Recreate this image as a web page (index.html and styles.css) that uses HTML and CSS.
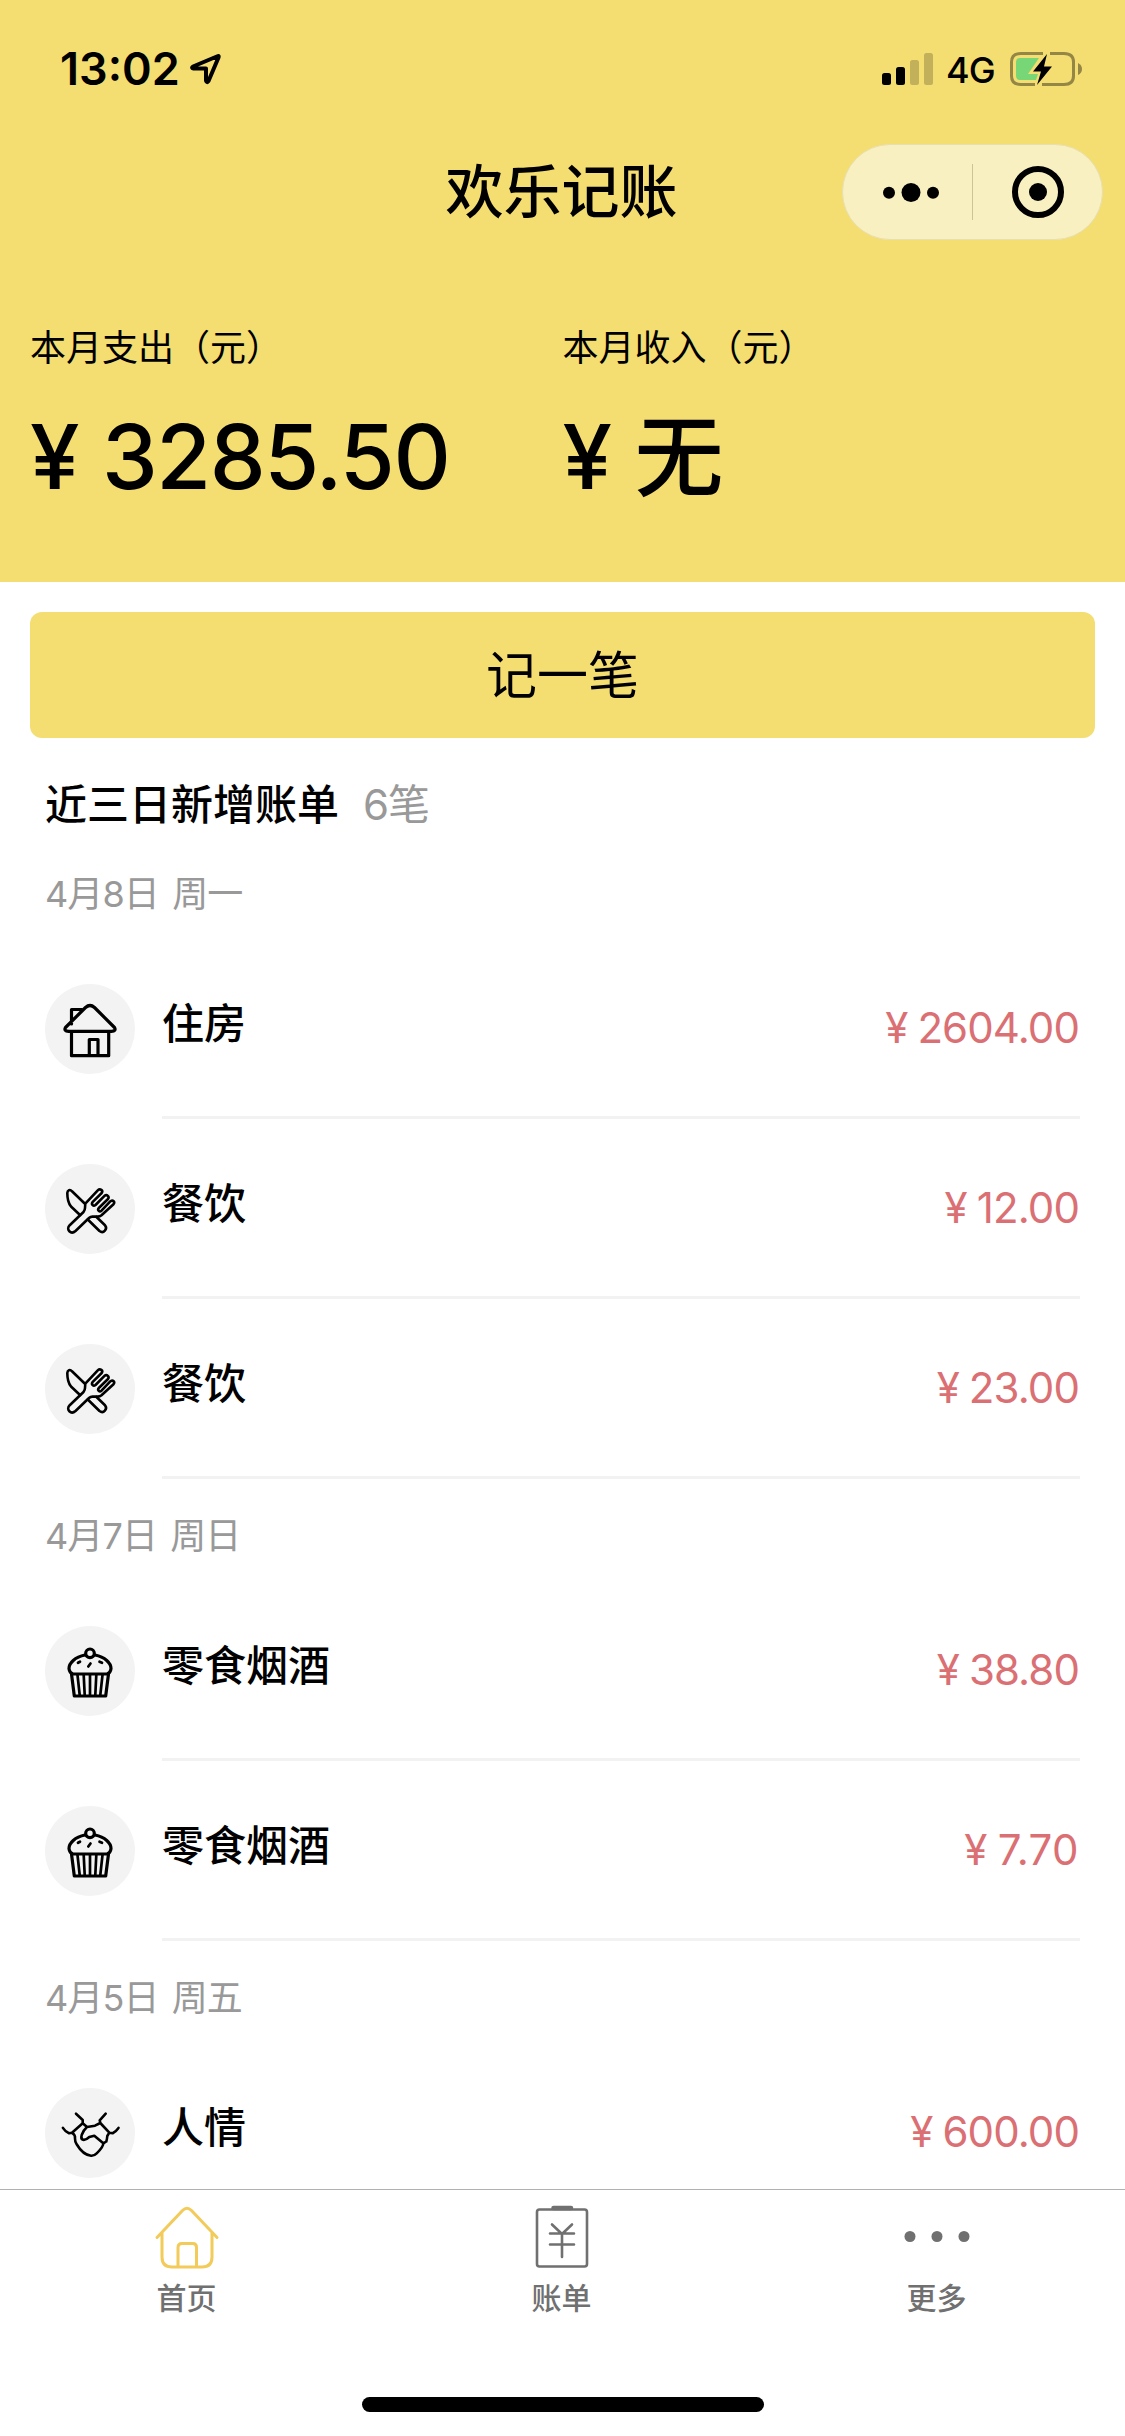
FILE: index.html
```html
<!DOCTYPE html>
<html lang="zh-CN">
<head>
<meta charset="utf-8">
<title>欢乐记账</title>
<link rel="stylesheet" href="styles.css">
</head>
<body>
<svg class="sprite" aria-hidden="true">
  <symbol id="i-house" viewBox="0 0 90 90">
    <path d="M26.500 40V25.500H37M24 47.300H66.500Q71.500 47 69.500 43.500L49.500 23.500Q45 19.500 40.500 23.500L20.500 43.500Q18.500 47 23.500 47.300M26.500 48V71.700H63.700V48M44.300 71V55.500H53V71"/>
  </symbol>
  <symbol id="i-meal" viewBox="0 0 90 90">
    <g class="mid">
    <path d="M39.700 39.500L27 27.300C25 25 22.500 26 22.300 29C22.300 36 23.500 39.500 26 42.500L35 51M51.500 53L60 61.300C63 65 58.500 70 54.500 67L42.800 55.500"/>
    <path d="M40.300 39.700L53 26.200C55 24 58.500 26.500 56.700 29L47.500 38.200C46 40.500 48.300 42.700 50.500 41L59.500 31.800C62 30 64.700 32.700 63 35L53.800 44C52 46.300 54.500 48.300 56.500 46.700L65.500 37.200C68 35.500 70.300 38 68.500 40.300L56.500 51.300Q55 52.600 52.500 52.600H47.500Q45.500 52.600 44 54L30.500 67C26 71 20.500 65.500 24.700 61.200L38.500 48Q40 46 40 44Z"/>
    </g>
  </symbol>
  <symbol id="i-cake" viewBox="0 0 90 90">
    <circle cx="45" cy="27.300" r="4.300"/>
    <path d="M40 29C30 31 24 37 24 42.500Q24.500 47 28 48H62Q65.500 47 66 42.500C66 37 60 31 50 29M26.500 48L29.300 70H60.700L63.500 48"/>
    <path class="thin" d="M32.500 49L34.700 69M38.700 49L39.700 69M45 49V69M51.300 49L50.300 69M57.500 49L55.300 69M33 36.800L35 35.700M54.500 35.700L57 36.800M43.300 40.500L45.500 37.500"/>
  </symbol>
  <symbol id="i-hands" viewBox="0 0 90 90">
    <path class="mid" d="M31 25.700L37.700 32V35.300L27 44.700L24 45.300Q20.500 44 17.900 39.900M60.700 25.700L54.700 32.300L55.300 35L64.300 44.700L67.700 45.300Q70.500 44 73.500 39.900M37.700 35.300L42 39L50 37.700L55.300 35M42 39Q38.500 42 36.700 47Q35.500 51 38 51.800Q40.500 52.500 44.300 49L49.300 47.700L58.300 55.300M27 44.700Q30.500 47 30 50.500Q30 54 31.500 56Q38 67 46 67.700Q49 68 51.700 65.300Q58.500 58.500 58.300 55.300L61.300 53.500Q62 51.500 62.300 48L64.300 44.700"/>
  </symbol>
</svg>

<header class="top">
  <div class="status">
    <div class="status-left">
      <span class="clock">13:02</span>
      <svg class="arrow" width="32" height="32" viewBox="0 0 32 32"><path d="M28 3L3 13.500Q1 15 3.500 15.500H16V27.500Q17 30.500 18.500 28L28.500 4.500Q29 2.500 28 3Z"/></svg>
    </div>
    <div class="status-right">
      <svg width="52" height="34" viewBox="0 0 52 34"><g><rect x="0" y="21" width="9" height="12" rx="2.500"/><rect x="14" y="15" width="9" height="18" rx="2.500"/><g opacity=".2"><rect x="28" y="8" width="9" height="25" rx="2.500"/><rect x="42" y="1" width="9" height="32" rx="2.500"/></g></g></svg>
      <span class="net">4G</span>
      <svg width="74" height="38" viewBox="0 0 74 38">
        <path d="M34 3.500H12Q2.500 3.500 2.500 12V26Q2.500 34.500 12 34.500H26M33 34.500H55Q64.500 34.500 64.500 26V12Q64.500 3.500 55 3.500H41" fill="none" stroke="#948644" stroke-width="3"/>
        <path d="M69 13Q73 15 73 19Q73 23 69 25Z" fill="#948644"/>
        <path d="M11 8H30L19 24H29L27 30H11Q7 30 7 26V12Q7 8 11 8Z" fill="#77d776"/>
        <path d="M38 4L24 21.500H32L28 35L43 16.500H35Z" fill="#000"/>
      </svg>
    </div>
  </div>
  <div class="nav">
    <h1>欢乐记账</h1>
    <div class="capsule">
      <svg width="129" height="94" viewBox="0 0 129 94"><circle cx="46" cy="47.700" r="6"/><circle cx="68" cy="47.500" r="9.500"/><circle cx="90" cy="47.700" r="6"/></svg>
      <i class="divider"></i>
      <svg width="129" height="94" viewBox="0 0 129 94"><circle cx="65" cy="47" r="23" fill="none" stroke="#000" stroke-width="6"/><circle cx="65" cy="47" r="9"/></svg>
    </div>
  </div>
  <div class="totals">
    <div class="total"><p>本月支出（元）</p><strong><span class="yen">¥</span><span>3285.50</span></strong></div>
    <div class="total"><p>本月收入（元）</p><strong><span class="yen">¥</span><span>无</span></strong></div>
  </div>
</header>

<main class="content">
  <button class="add">记一笔</button>
  <h2 class="heading">近三日新增账单<span>6笔</span></h2>

  <h3 class="date">4月8日 周一</h3>
  <div class="row"><svg class="icon"><use href="#i-house"/></svg><div class="body"><span class="name">住房</span><span class="price"><i>¥</i>2604.00</span></div></div>
  <div class="row"><svg class="icon"><use href="#i-meal"/></svg><div class="body"><span class="name">餐饮</span><span class="price"><i>¥</i>12.00</span></div></div>
  <div class="row"><svg class="icon"><use href="#i-meal"/></svg><div class="body"><span class="name">餐饮</span><span class="price"><i>¥</i>23.00</span></div></div>

  <h3 class="date">4月7日 周日</h3>
  <div class="row"><svg class="icon"><use href="#i-cake"/></svg><div class="body"><span class="name">零食烟酒</span><span class="price"><i>¥</i>38.80</span></div></div>
  <div class="row"><svg class="icon"><use href="#i-cake"/></svg><div class="body"><span class="name">零食烟酒</span><span class="price loose"><i>¥</i>7.70</span></div></div>

  <h3 class="date">4月5日 周五</h3>
  <div class="row"><svg class="icon"><use href="#i-hands"/></svg><div class="body"><span class="name">人情</span><span class="price"><i>¥</i>600.00</span></div></div>
</main>

<footer class="tabbar">
  <nav class="tabs">
    <a class="tab active"><svg width="72" height="72" viewBox="0 0 72 72"><path d="M6 37.500L31.500 10.500Q36 6 40.500 10.500L66 37.500M11 33V57Q11 67 21 67H51Q61 67 61 57V33M27 66V47.500Q27 43.500 31 43.500H42Q45.500 43.500 45.500 47.500V66"/></svg><span>首页</span></a>
    <a class="tab"><svg width="72" height="72" viewBox="0 0 72 72"><rect x="11" y="9.500" width="50" height="57" rx="2.500"/><path d="M27.500 8H45" stroke-width="4.500"/><path d="M26 24.500L36 34L46 24.500M24 33.500H48M24 44.500H48M36 34V57"/></svg><span>账单</span></a>
    <a class="tab"><svg width="72" height="72" viewBox="0 0 72 72"><g fill="#707070" stroke="none"><circle cx="9" cy="36.500" r="5.500"/><circle cx="36" cy="36.500" r="5.500"/><circle cx="63" cy="36.500" r="5.500"/></g></svg><span>更多</span></a>
  </nav>
  <div class="home-indicator"></div>
</footer>
</body>
</html>
```

FILE: styles.css
```css
* { box-sizing: border-box; margin: 0; padding: 0; }
body {
  display: flex;
  flex-direction: column;
  width: 1125px;
  height: 2436px;
  overflow: hidden;
  background: #fff;
  color: #000;
  font-family: Inter, "Noto Sans CJK SC", sans-serif;
}
i { font-style: normal; }
svg { display: block; flex: none; }
.sprite { display: none; }

.top { flex: none; height: 582px; background: #f4dd71; }
.status { display: flex; justify-content: space-between; height: 144px; padding: 50px 42px 0 60px; }
.status-left, .status-right { display: flex; height: 38px; align-items: center; }
.clock { font-size: 45px; font-weight: 600; line-height: 38px; }
.arrow { margin-left: 10px; fill: none; stroke: #000; stroke-width: 4; stroke-linejoin: round; }
.net { width: 51px; margin: 2px 12px 0 12px; font-size: 36px; font-weight: 450; line-height: 38px; letter-spacing: -1px; }

.nav { display: grid; grid-template-columns: 1fr auto 1fr; align-items: center; height: 96px; }
.nav h1 { grid-column: 2; padding-right: 2px; font-size: 58px; font-weight: 500; line-height: 96px; }
.capsule { display: flex; align-items: center; justify-self: end; width: 261px; height: 96px; margin-right: 22px; border: 1px solid #e8dfae; border-radius: 48px; background: #f9f0c2; }
.divider { flex: none; width: 1px; height: 56px; background: #cdc493; }

.totals { display: grid; grid-template-columns: 1fr 1fr; padding: 81px 30px 0; }
.total p { font-size: 36px; line-height: 54px; }
.total strong { display: flex; height: 130px; margin-top: 17px; align-items: center; font-size: 89px; font-weight: 500; line-height: 130px; letter-spacing: -1.500px; }
.yen { width: 72px; }

.content { flex: none; height: 1607px; overflow: hidden; padding: 30px 30px 0; }
.add { display: block; width: 1065px; height: 126px; padding-bottom: 6px; border: 0; border-radius: 12px; background: #f4dd71; color: #000; font: 400 51px/120px "Noto Sans CJK SC", sans-serif; }
.heading { height: 99px; padding: 33px 0 0 15px; font-size: 42px; font-weight: 500; line-height: 67px; }
.heading span { margin-left: 24px; color: #999; font-weight: 400; letter-spacing: -1px; }
.date { height: 102px; padding: 12px 0 0 15px; color: #999; font-size: 36px; font-weight: 400; line-height: 90px; letter-spacing: -.900px; word-spacing: 4px; }
.row { display: flex; height: 180px; padding-left: 15px; }
.icon { width: 90px; height: 90px; margin: 45px 27px 0 0; border-radius: 50%; background: #f3f3f3; fill: none; stroke: #000; stroke-width: 3.200; stroke-linejoin: round; stroke-linecap: round; }
.mid { stroke-width: 2.600; }
.thin { stroke-width: 2.700; }
.body { display: flex; justify-content: space-between; width: 918px; padding-top: 45px; border-bottom: 3px solid #f2f2f2; }
.name { font-size: 42px; font-weight: 500; line-height: 80px; }
.price { padding-right: 1px; color: #db7074; font-size: 42px; font-weight: 400; line-height: 88px; letter-spacing: -.900px; }
.price i { margin-right: 10px; }
.price.loose { letter-spacing: .400px; }

.tabbar { display: flex; flex: none; flex-direction: column; align-items: center; height: 247px; border-top: 1px solid #b2b2b2; background: #fff; }
.tabs { display: grid; grid-template-columns: repeat(3, 1fr); width: 1125px; height: 207px; padding: 10px 0 0; }
.tab { display: flex; flex-direction: column; align-items: center; padding-right: 2px; color: #707070; font-size: 30px; font-weight: 500; line-height: 52px; }
.tab svg { fill: none; stroke: #707070; stroke-width: 2.600; stroke-linecap: round; stroke-linejoin: round; }
.tab.active svg { stroke: #f2cb5a; stroke-width: 3; }
.home-indicator { width: 402px; height: 15px; border-radius: 8px; background: #000; }
```
